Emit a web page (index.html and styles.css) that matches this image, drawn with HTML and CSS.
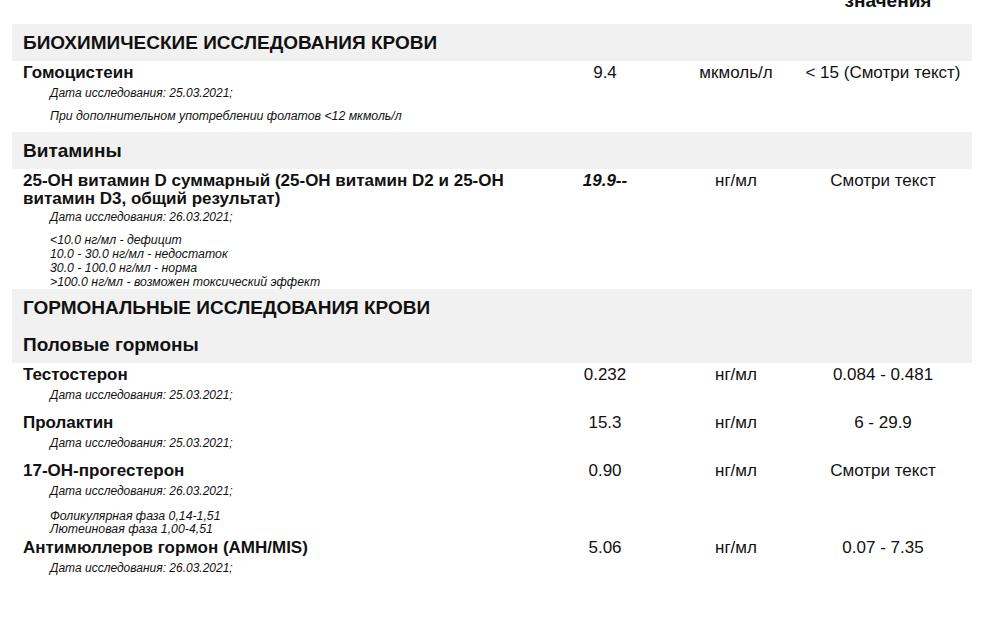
FILE: index.html
```html
<!DOCTYPE html>
<html lang="ru">
<head>
<meta charset="utf-8">
<title>Результаты исследований</title>
<link rel="stylesheet" href="styles.css">
</head>
<body>
<div class="page">
  <div class="colhead">
    <div></div><div></div><div></div>
    <div class="colhead__ref">Референсные<br>значения</div>
  </div>

  <div class="band band--section">БИОХИМИЧЕСКИЕ ИССЛЕДОВАНИЯ КРОВИ</div>
  <div class="row">
    <div class="cell-name">
      <div class="name">Гомоцистеин</div>
      <div class="date">Дата исследования: 25.03.2021;</div>
      <div class="note">При дополнительном употреблении фолатов &lt;12 мкмоль/л</div>
    </div>
    <div class="val">9.4</div>
    <div class="unit">мкмоль/л</div>
    <div class="ref">&lt; 15 (Смотри текст)</div>
  </div>

  <div class="band">Витамины</div>
  <div class="row row--flush">
    <div class="cell-name">
      <div class="name">25-ОН витамин D суммарный (25-ОН витамин D2 и 25-ОН витамин D3, общий результат)</div>
      <div class="date date--tight">Дата исследования: 26.03.2021;</div>
      <div class="note note--spaced">&lt;10.0 нг/мл - дефицит<br>10.0 - 30.0 нг/мл - недостаток<br>30.0 - 100.0 нг/мл - норма<br>&gt;100.0 нг/мл - возможен токсический эффект</div>
    </div>
    <div class="val val--flag">19.9--</div>
    <div class="unit">нг/мл</div>
    <div class="ref">Смотри текст</div>
  </div>

  <div class="band band--section">ГОРМОНАЛЬНЫЕ ИССЛЕДОВАНИЯ КРОВИ</div>
  <div class="band">Половые гормоны</div>
  <div class="row">
    <div class="cell-name">
      <div class="name">Тестостерон</div>
      <div class="date">Дата исследования: 25.03.2021;</div>
    </div>
    <div class="val">0.232</div>
    <div class="unit">нг/мл</div>
    <div class="ref">0.084 - 0.481</div>
  </div>
  <div class="row">
    <div class="cell-name">
      <div class="name">Пролактин</div>
      <div class="date">Дата исследования: 25.03.2021;</div>
    </div>
    <div class="val">15.3</div>
    <div class="unit">нг/мл</div>
    <div class="ref">6 - 29.9</div>
  </div>
  <div class="row row--flush">
    <div class="cell-name">
      <div class="name">17-ОН-прогестерон</div>
      <div class="date">Дата исследования: 26.03.2021;</div>
      <div class="note note--phase">Фоликулярная фаза 0,14-1,51<br>Лютеиновая фаза 1,00-4,51</div>
    </div>
    <div class="val">0.90</div>
    <div class="unit">нг/мл</div>
    <div class="ref">Смотри текст</div>
  </div>
  <div class="row">
    <div class="cell-name">
      <div class="name">Антимюллеров гормон (AMH/MIS)</div>
      <div class="date">Дата исследования: 26.03.2021;</div>
    </div>
    <div class="val">5.06</div>
    <div class="unit">нг/мл</div>
    <div class="ref">0.07 - 7.35</div>
  </div>
</div>
</body>
</html>
```

FILE: styles.css
```css
html, body {
  margin: 0;
  padding: 0;
  background: #ffffff;
}

body {
  font-family: "Liberation Sans", Arial, Helvetica, sans-serif;
  color: #111111;
  overflow: hidden;
}

.page {
  width: 960px;
  margin: 0 12px;
}

.colhead,
.row {
  display: grid;
  grid-template-columns: 520px 146px 116px 178px;
}

.colhead {
  margin-top: -28px;
  margin-bottom: 14px;
  font-size: 19px;
  font-weight: bold;
  line-height: 19px;
}

.colhead__ref {
  text-align: center;
  padding-left: 10px;
}

.band {
  background: #f1f1f1;
  padding: 8px 11px 7px;
  font-size: 19px;
  line-height: 22px;
  font-weight: bold;
}

.row {
  padding: 3px 0 9px;
  font-size: 17px;
  line-height: 18px;
}

.row--flush {
  padding-bottom: 0;
}

.cell-name {
  padding-left: 11px;
}

.name {
  font-weight: bold;
  min-height: 23px;
}

.date,
.note {
  font-style: italic;
  padding-left: 27px;
}

.date {
  font-size: 12px;
  line-height: 13px;
}

.date--tight {
  margin-top: 3px;
}

.note {
  font-size: 12.3px;
  line-height: 13px;
  margin-top: 10px;
}

.note--spaced {
  margin-top: 9px;
  line-height: 14px;
}

.note--phase {
  margin-top: 12px;
}

.val,
.unit,
.ref {
  text-align: center;
}

.val--flag {
  font-weight: bold;
  font-style: italic;
}
```
